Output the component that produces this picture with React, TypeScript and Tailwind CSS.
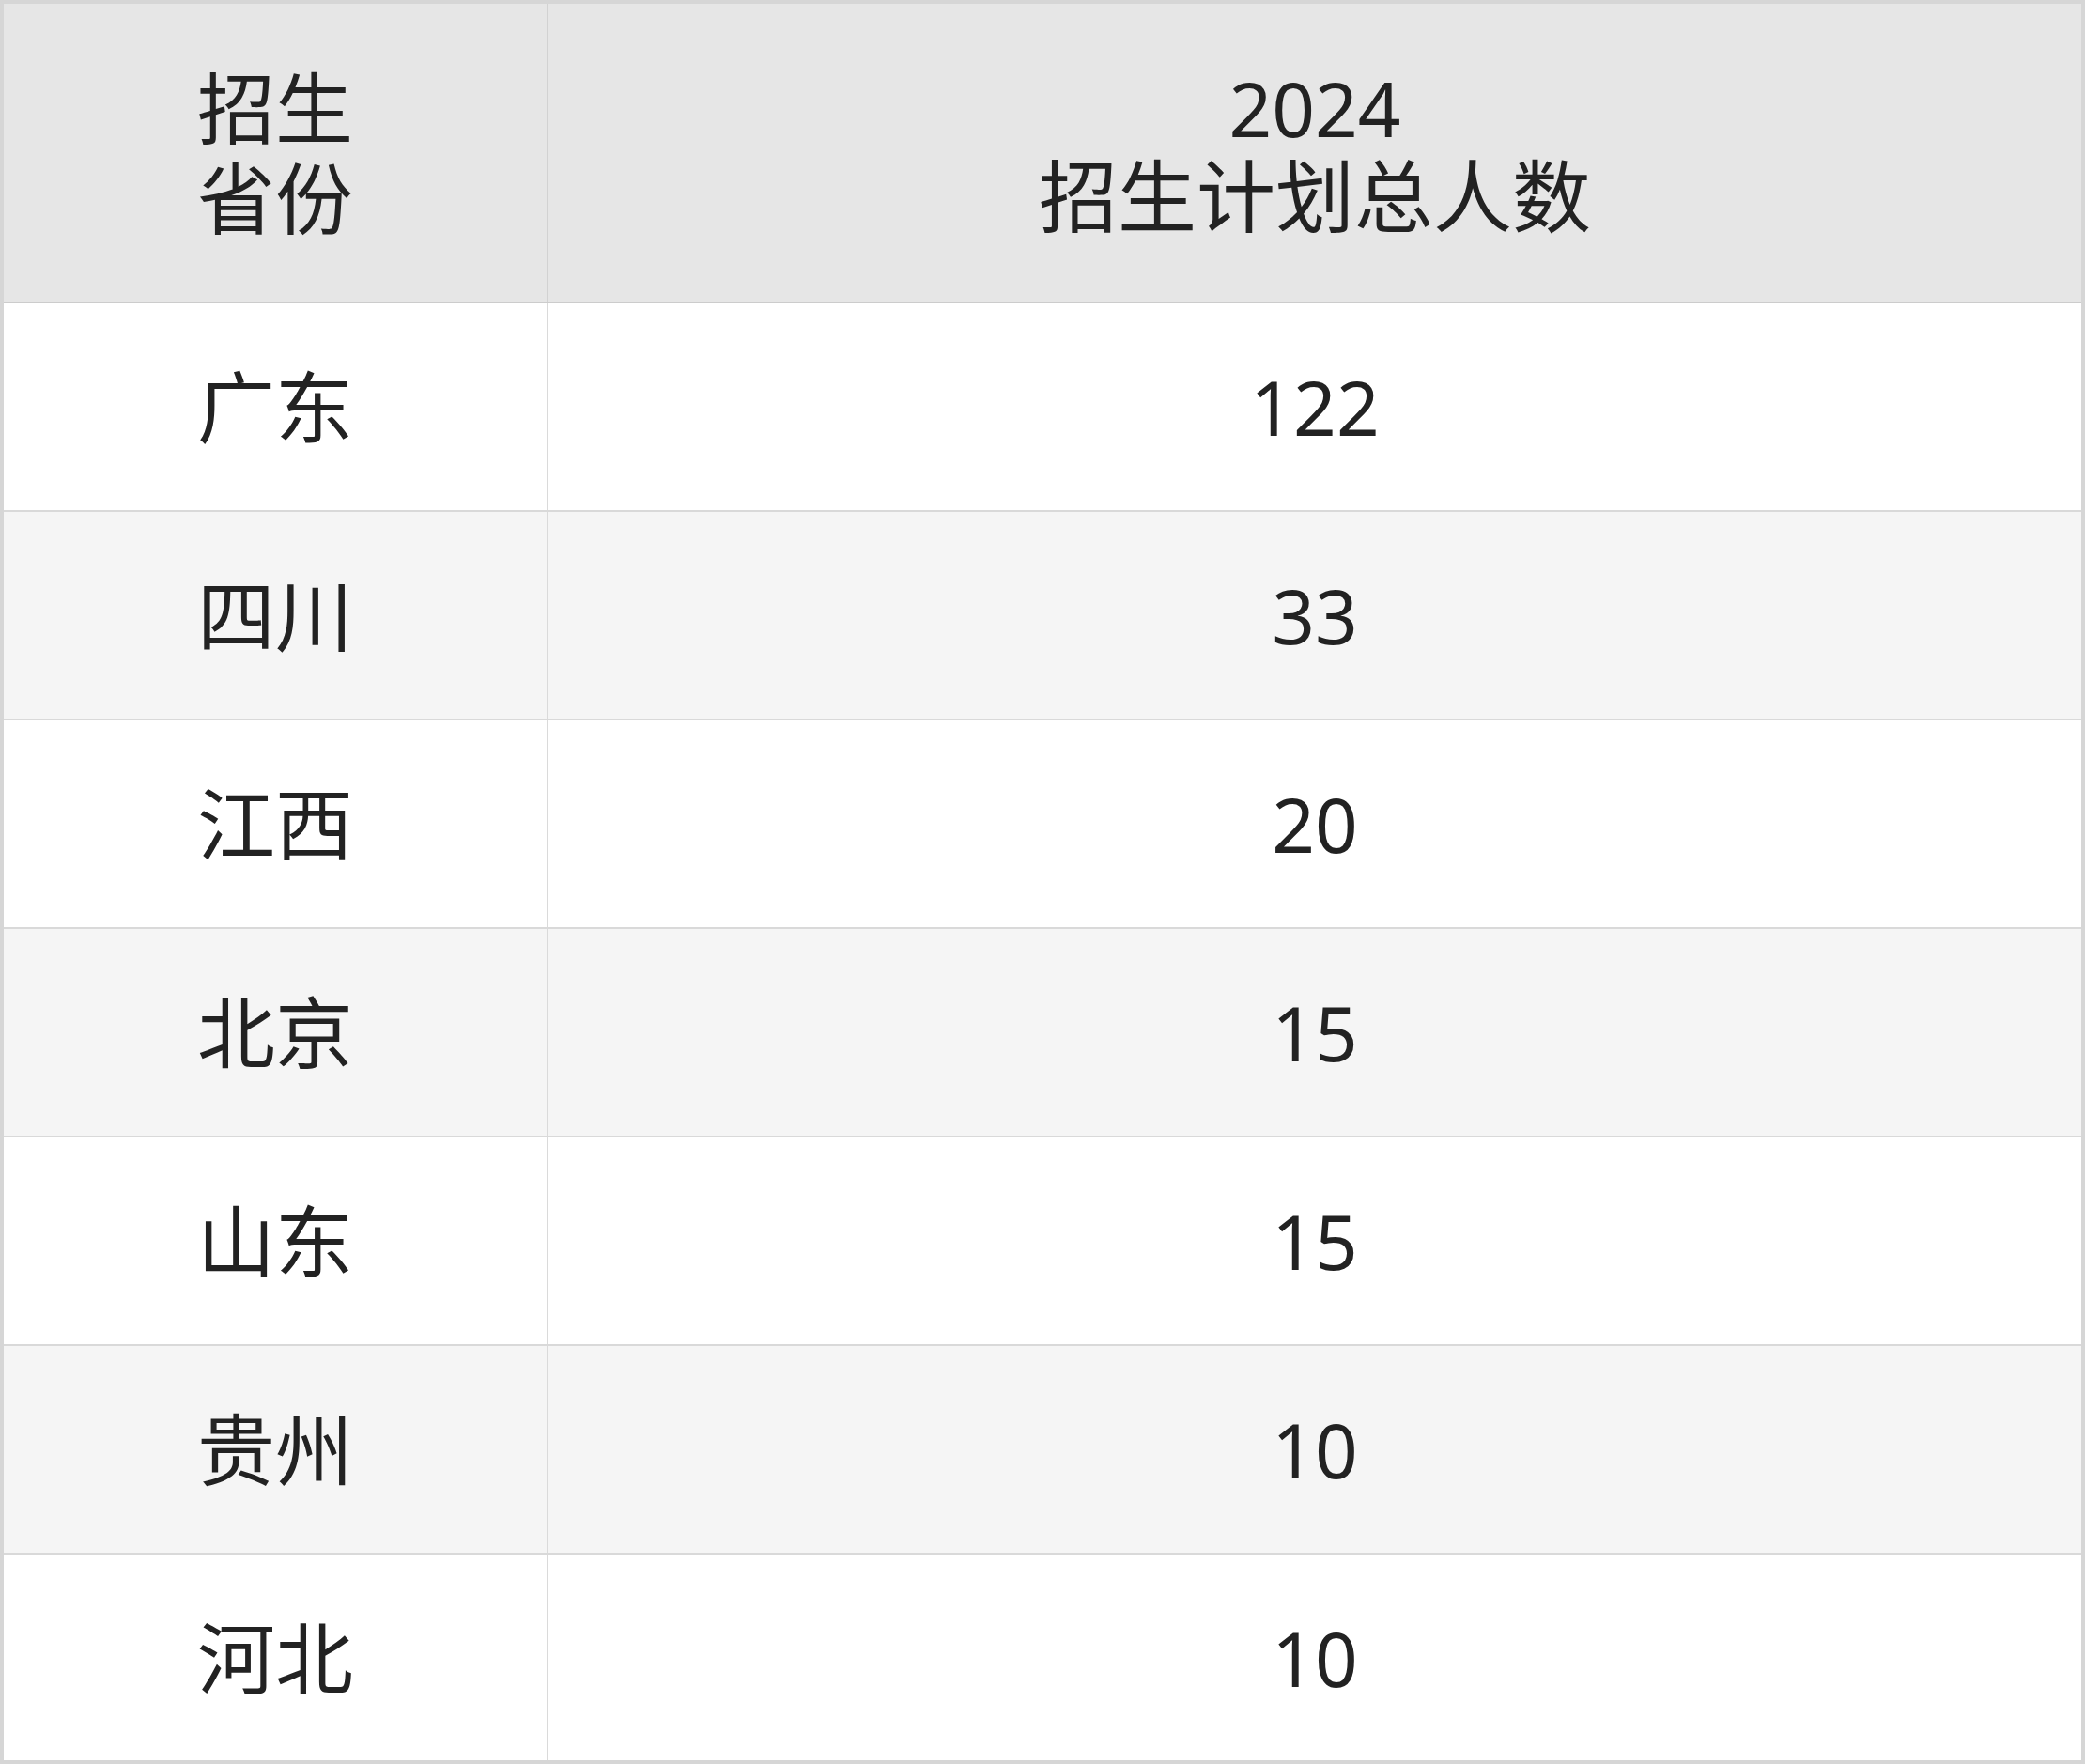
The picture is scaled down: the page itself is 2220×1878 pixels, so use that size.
const ROWS = [
  { province: "广东", total: "122" },
  { province: "四川", total: "33" },
  { province: "江西", total: "20" },
  { province: "北京", total: "15" },
  { province: "山东", total: "15" },
  { province: "贵州", total: "10" },
  { province: "河北", total: "10" },
];

const FONT = { fontFamily: '"Noto Sans", "Noto Sans CJK SC", sans-serif' };

export default function App() {
  return (
    <div
      className="w-[2220px] h-[1878px] bg-white border-4 border-[#d6d6d6] text-[#222222] text-[80px] leading-[96px]"
      style={FONT}
    >
      {/* Header */}
      <div className="flex h-[319px] bg-[#e6e6e6] border-b-2 border-[#cccccc]">
        <div className="w-[580px] flex items-center justify-center border-r-2 border-[#d2d2d2]">
          <div className="text-center text-[83px] leading-[96px]">
            <div>招生</div>
            <div>省份</div>
          </div>
        </div>
        <div className="flex-1 flex items-center justify-center">
          <div className="text-center">
            <div className="leading-[92px]">2024</div>
            <div className="text-[84px] leading-[96px]">招生计划总人数</div>
          </div>
        </div>
      </div>

      {/* Rows */}
      {ROWS.map((row, i) => (
        <div
          key={i}
          className={
            "flex " +
            (i < ROWS.length - 1 ? "h-[222px] border-b-2 border-[#d9d9d9] " : "h-[219px] ") +
            (i % 2 === 0 ? "bg-white" : "bg-[#f5f5f5]")
          }
        >
          <div className="w-[580px] flex items-center justify-center border-r-2 border-[#dadada] text-[83px]">
            {row.province}
          </div>
          <div className="flex-1 flex items-center justify-center">{row.total}</div>
        </div>
      ))}
    </div>
  );
}
